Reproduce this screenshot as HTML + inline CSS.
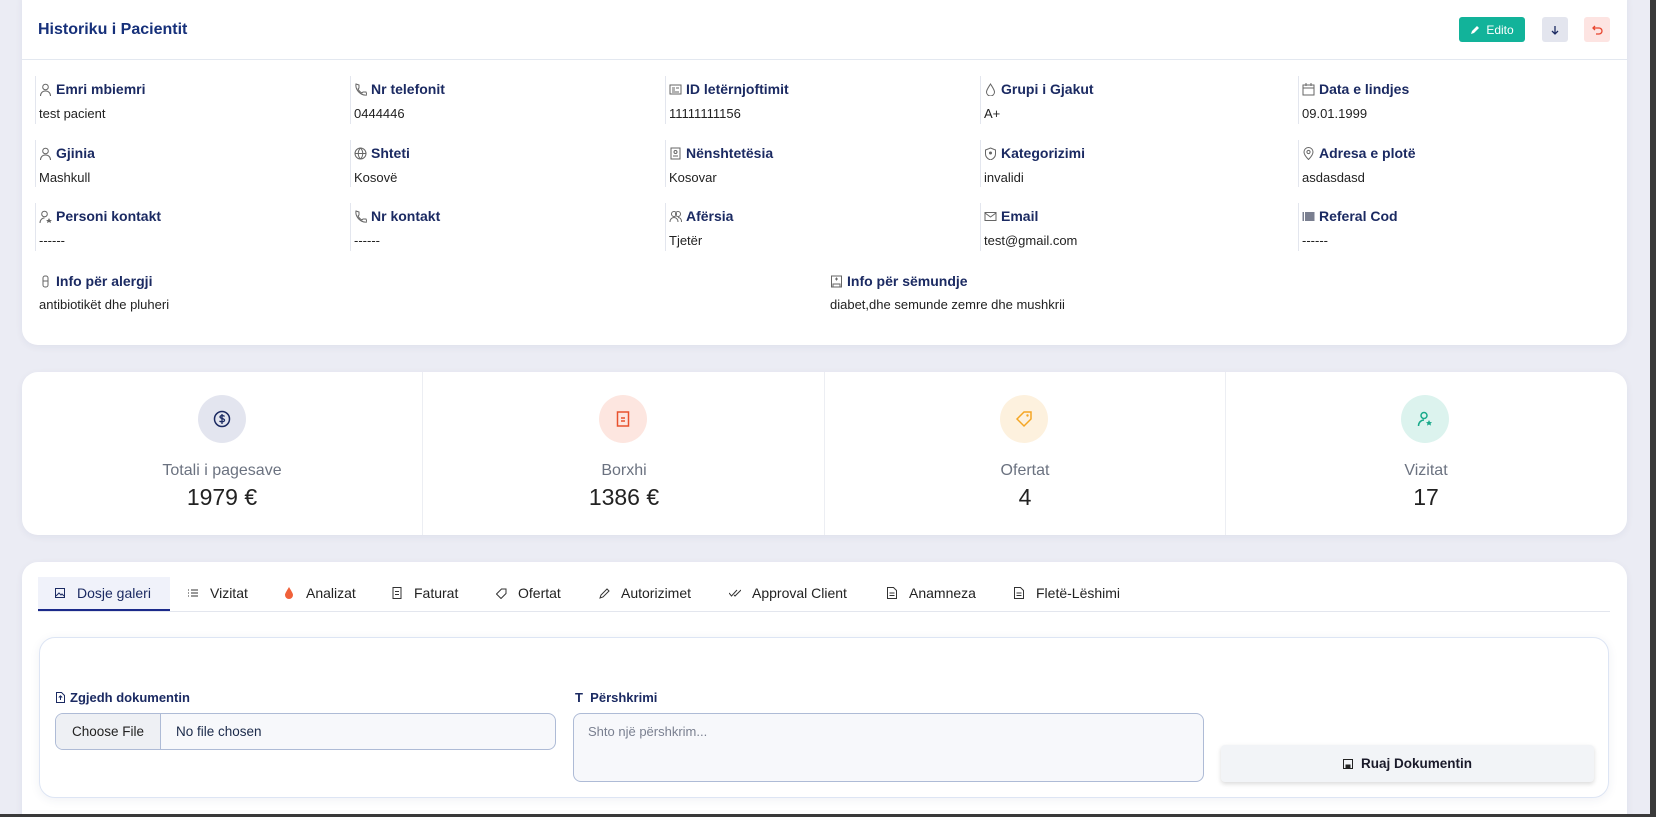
<!DOCTYPE html>
<html style="overflow:hidden;width:1656px;height:817px"><head><meta charset="utf-8"><style>
*{box-sizing:border-box;margin:0;padding:0}
body{width:1656px;height:817px;overflow:hidden;background:#ebecf4;font-family:"Liberation Sans",sans-serif;position:relative;color:#222}
#w{position:absolute;left:0;top:0;width:1656px;height:817px;overflow:hidden}
.card{position:absolute;background:#fff;border-radius:16px;box-shadow:0 2px 8px rgba(40,50,100,.06)}
.abs{position:absolute}
.lbl{position:absolute;font-size:14px;font-weight:bold;color:#1b2a62;white-space:nowrap;display:flex;align-items:center;gap:4px}
.val{position:absolute;font-size:13px;color:#222;white-space:nowrap}
.vl{position:absolute;width:1px;background:#e3e6ee}
.ic{width:13px;height:13px;flex:none}
.tab{position:absolute;top:585px;font-size:14px;color:#222;white-space:nowrap;display:flex;align-items:center;gap:8px}
.circ{position:absolute;width:48px;height:48px;border-radius:50%;top:395px;display:flex;align-items:center;justify-content:center}
.sl{position:absolute;top:462px;font-size:16px;color:#6b7280;text-align:center;width:402px}
.sv{position:absolute;top:484px;font-size:23px;color:#222;text-align:center;width:402px}
</style></head><body><div id="w">

<div class="card" style="left:22px;top:-16px;width:1605px;height:361px"></div>
<div class="abs" style="left:38px;top:21px;font-size:16px;font-weight:bold;color:#16307a">Historiku i Pacientit</div>
<div class="abs" style="left:1459px;top:17px;width:66px;height:25px;background:#12b39a;border-radius:3px;color:#fff;font-size:12px;display:flex;align-items:center;justify-content:center;gap:6px"><svg width="10" height="10" viewBox="0 0 10 10"><path d="M1 9l1-3 5-5 2 2-5 5z" fill="#fff"/></svg>Edito</div>
<div class="abs" style="left:1542px;top:17px;width:26px;height:25px;background:#e3e5ee;border-radius:3px;display:flex;align-items:center;justify-content:center"><svg width="10" height="10" viewBox="0 0 10 10"><path d="M5 1v8M2 6l3 3 3-3" stroke="#1b2a62" stroke-width="1.3" fill="none"/></svg></div>
<div class="abs" style="left:1584px;top:17px;width:26px;height:25px;background:#fde4e2;border-radius:3px;display:flex;align-items:center;justify-content:center"><svg width="11" height="11" viewBox="0 0 11 11"><path d="M3 2L1 4l2 2M1 4h6a3 3 0 010 6H4" stroke="#e8452e" stroke-width="1.3" fill="none"/></svg></div>
<div class="abs" style="left:22px;top:59px;width:1605px;height:1px;background:#e3e8f0"></div>

<div class="vl" style="left:35px;top:76px;height:48px"></div><div class="vl" style="left:350px;top:76px;height:48px"></div><div class="vl" style="left:665px;top:76px;height:48px"></div><div class="vl" style="left:980px;top:76px;height:48px"></div><div class="vl" style="left:1298px;top:76px;height:48px"></div>
<div class="vl" style="left:35px;top:140px;height:47px"></div><div class="vl" style="left:350px;top:140px;height:47px"></div><div class="vl" style="left:665px;top:140px;height:47px"></div><div class="vl" style="left:980px;top:140px;height:47px"></div><div class="vl" style="left:1298px;top:140px;height:47px"></div>
<div class="vl" style="left:35px;top:203px;height:48px"></div><div class="vl" style="left:350px;top:203px;height:48px"></div><div class="vl" style="left:665px;top:203px;height:48px"></div><div class="vl" style="left:980px;top:203px;height:48px"></div><div class="vl" style="left:1298px;top:203px;height:48px"></div>

<div class="lbl" style="left:39px;top:81px"><svg class="ic" viewBox="0 0 13 13"><circle cx="6.5" cy="4" r="2.8" stroke="#666" fill="none"/><path d="M1.5 13c0-3 2-5 5-5s5 2 5 5" stroke="#666" fill="none"/></svg>Emri mbiemri</div>
<div class="val" style="left:39px;top:106px">test pacient</div>
<div class="lbl" style="left:354px;top:81px"><svg class="ic" viewBox="0 0 13 13"><path d="M2 1l3 1 0 3-1 1c1 2 2 3 4 4l1-1 3 0 1 3c-6 1-12-5-11-11z" stroke="#666" fill="none"/></svg>Nr telefonit</div>
<div class="val" style="left:354px;top:106px">0444446</div>
<div class="lbl" style="left:669px;top:81px"><svg class="ic" viewBox="0 0 13 13"><rect x="1" y="2" width="11" height="9" stroke="#666" fill="none"/><path d="M3 5h3M3 7h3M7 5h3M3 9h7" stroke="#666"/></svg>ID letërnjoftimit</div>
<div class="val" style="left:669px;top:106px">11111111156</div>
<div class="lbl" style="left:984px;top:81px"><svg class="ic" viewBox="0 0 13 13"><path d="M6.5 1C4 5 2.5 7 2.5 9a4 4 0 008 0c0-2-1.5-4-4-8z" stroke="#666" fill="none"/></svg>Grupi i Gjakut</div>
<div class="val" style="left:984px;top:106px">A+</div>
<div class="lbl" style="left:1302px;top:81px"><svg class="ic" viewBox="0 0 13 13"><rect x="1" y="2" width="11" height="10" stroke="#666" fill="none"/><path d="M1 5h11M4 0v3M9 0v3" stroke="#666"/></svg>Data e lindjes</div>
<div class="val" style="left:1302px;top:106px">09.01.1999</div>

<div class="lbl" style="left:39px;top:145px"><svg class="ic" viewBox="0 0 13 13"><circle cx="6.5" cy="4" r="2.8" stroke="#666" fill="none"/><path d="M1.5 13c0-3 2-5 5-5s5 2 5 5" stroke="#666" fill="none"/></svg>Gjinia</div>
<div class="val" style="left:39px;top:170px">Mashkull</div>
<div class="lbl" style="left:354px;top:145px"><svg class="ic" viewBox="0 0 13 13"><circle cx="6.5" cy="6.5" r="5.5" stroke="#666" fill="none"/><path d="M1 6.5h11M6.5 1c-3 3-3 8 0 11M6.5 1c3 3 3 8 0 11" stroke="#666" fill="none"/></svg>Shteti</div>
<div class="val" style="left:354px;top:170px">Kosovë</div>
<div class="lbl" style="left:669px;top:145px"><svg class="ic" viewBox="0 0 13 13"><rect x="2" y="1" width="9" height="11" stroke="#666" fill="none"/><circle cx="6.5" cy="5" r="1.5" stroke="#666" fill="none"/><path d="M4 9h5" stroke="#666"/></svg>Nënshtetësia</div>
<div class="val" style="left:669px;top:170px">Kosovar</div>
<div class="lbl" style="left:984px;top:145px"><svg class="ic" viewBox="0 0 13 13"><path d="M6.5 1l5 2v4c0 3-2.5 5-5 6-2.5-1-5-3-5-6V3z" stroke="#666" fill="none"/><circle cx="6.5" cy="6" r="1.5" fill="#666"/></svg>Kategorizimi</div>
<div class="val" style="left:984px;top:170px">invalidi</div>
<div class="lbl" style="left:1302px;top:145px"><svg class="ic" viewBox="0 0 13 13"><path d="M6.5 12.5C3 9 2 7 2 5a4.5 4.5 0 019 0c0 2-1 4-4.5 7.5z" stroke="#666" fill="none"/><circle cx="6.5" cy="5" r="1.6" stroke="#666" fill="none"/></svg>Adresa e plotë</div>
<div class="val" style="left:1302px;top:170px">asdasdasd</div>

<div class="lbl" style="left:39px;top:208px"><svg class="ic" viewBox="0 0 13 13"><circle cx="5.5" cy="4" r="2.8" stroke="#666" fill="none"/><path d="M1 13c0-3 2-5 4.5-5" stroke="#666" fill="none"/><path d="M10 8l1 2 2 0-1.5 1.3.5 1.7-2-1-2 1 .5-1.7L7 10h2z" fill="#666"/></svg>Personi kontakt</div>
<div class="val" style="left:39px;top:233px">------</div>
<div class="lbl" style="left:354px;top:208px"><svg class="ic" viewBox="0 0 13 13"><path d="M2 1l3 1 0 3-1 1c1 2 2 3 4 4l1-1 3 0 1 3c-6 1-12-5-11-11z" stroke="#666" fill="none"/></svg>Nr kontakt</div>
<div class="val" style="left:354px;top:233px">------</div>
<div class="lbl" style="left:669px;top:208px"><svg class="ic" viewBox="0 0 13 13"><circle cx="5" cy="4" r="2.5" stroke="#666" fill="none"/><circle cx="9" cy="4" r="2.5" stroke="#666" fill="none"/><path d="M1 12c0-3 2-4.5 4-4.5s4 1.5 4 4.5M9 7.5c2 0 3.5 1.5 3.5 4.5" stroke="#666" fill="none"/></svg>Afërsia</div>
<div class="val" style="left:669px;top:233px">Tjetër</div>
<div class="lbl" style="left:984px;top:208px"><svg class="ic" viewBox="0 0 13 13"><rect x="1" y="2.5" width="11" height="8" stroke="#666" fill="none"/><path d="M1 3l5.5 4L12 3" stroke="#666" fill="none"/></svg>Email</div>
<div class="val" style="left:984px;top:233px">test@gmail.com</div>
<div class="lbl" style="left:1302px;top:208px"><svg class="ic" viewBox="0 0 13 13"><rect x="0.5" y="2" width="12" height="9" fill="#7a7f90"/><path d="M2.5 2v9" stroke="#fff"/></svg>Referal Cod</div>
<div class="val" style="left:1302px;top:233px">------</div>

<div class="lbl" style="left:39px;top:273px"><svg class="ic" viewBox="0 0 13 13"><rect x="4" y="1" width="5" height="11" rx="2" stroke="#666" fill="none"/><path d="M4 6h5" stroke="#666"/></svg>Info për alergji</div>
<div class="val" style="left:39px;top:297px">antibiotikët dhe pluheri</div>
<div class="lbl" style="left:830px;top:273px"><svg class="ic" viewBox="0 0 13 13"><rect x="1.5" y="1" width="10" height="11" stroke="#666" fill="none"/><path d="M5 4h3M6.5 2.5v3M3 12V9h7v3" stroke="#666" fill="none"/></svg>Info për sëmundje</div>
<div class="val" style="left:830px;top:297px">diabet,dhe semunde zemre dhe mushkrii</div>

<div class="card" style="left:22px;top:372px;width:1605px;height:163px"></div>
<div class="vl" style="left:422px;top:372px;height:163px;background:#eceef3"></div>
<div class="vl" style="left:824px;top:372px;height:163px;background:#eceef3"></div>
<div class="vl" style="left:1225px;top:372px;height:163px;background:#eceef3"></div>
<div class="circ" style="left:198px;background:#e3e5ef"><svg width="18" height="18" viewBox="0 0 18 18"><circle cx="9" cy="9" r="7.5" stroke="#1b2a62" stroke-width="1.5" fill="none"/><path d="M11.5 6.5c-.5-1-4.5-1.5-4.5.5s5 1 4.5 3.5c-.5 1.8-4 1.5-5 .5M9 4v10" stroke="#1b2a62" stroke-width="1.3" fill="none"/></svg></div>
<div class="circ" style="left:599px;background:#fde6e0"><svg width="18" height="18" viewBox="0 0 18 18"><rect x="3.5" y="2" width="11" height="14" stroke="#e8522e" stroke-width="1.5" fill="none"/><path d="M7 8h4M7 11h4" stroke="#e8522e" stroke-width="1.5"/></svg></div>
<div class="circ" style="left:1000px;background:#fdf1de"><svg width="18" height="18" viewBox="0 0 18 18"><path d="M9 2h7v7l-7 7-7-7z" stroke="#f5a623" stroke-width="1.5" fill="none"/><circle cx="12.5" cy="5.5" r="1.2" fill="#f5a623"/></svg></div>
<div class="circ" style="left:1401px;background:#dcf3ee"><svg width="18" height="18" viewBox="0 0 18 18"><circle cx="8" cy="5.5" r="3" stroke="#18a98a" stroke-width="1.5" fill="none"/><path d="M2.5 16c0-3.5 2.5-6 5.5-6" stroke="#18a98a" stroke-width="1.5" fill="none"/><path d="M13 10l1 2 2 .2-1.5 1.4.5 2-2-1.1-2 1.1.5-2L10 12.2l2-.2z" fill="#18a98a"/></svg></div>
<div class="sl" style="left:21px">Totali i pagesave</div><div class="sv" style="left:21px">1979 €</div>
<div class="sl" style="left:423px">Borxhi</div><div class="sv" style="left:423px">1386 €</div>
<div class="sl" style="left:824px">Ofertat</div><div class="sv" style="left:824px">4</div>
<div class="sl" style="left:1225px">Vizitat</div><div class="sv" style="left:1225px">17</div>

<div class="card" style="left:22px;top:562px;width:1605px;height:280px"></div>
<div class="abs" style="left:38px;top:577px;width:132px;height:34px;background:#f0f2fa;border-bottom:2px solid #1b2a8a"></div>
<div class="abs" style="left:38px;top:611px;width:1572px;height:1px;background:#e3e6ee"></div>
<div class="tab" style="left:55px"><svg width="10" height="10" viewBox="0 0 10 10"><rect x=".5" y=".5" width="9" height="9" stroke="#1b2a62" fill="none"/><path d="M1 8l3-3 2 2 1-1 2 2" stroke="#1b2a62" fill="none"/></svg><span style="margin-left:4px;color:#1b2a62">Dosje galeri</span></div>
<div class="tab" style="left:188px"><svg width="10" height="10" viewBox="0 0 10 10"><path d="M0 2h1M3 2h7M0 5h1M3 5h7M0 8h1M3 8h7" stroke="#333"/></svg><span style="margin-left:4px">Vizitat</span></div>
<div class="tab" style="left:284px"><svg width="10" height="12" viewBox="0 0 10 12"><path d="M5 0C2 5 1 6.5 1 8a4 4 0 008 0C9 6.5 8 5 5 0z" fill="#f0613a"/></svg><span style="margin-left:4px">Analizat</span></div>
<div class="tab" style="left:392px"><svg width="10" height="12" viewBox="0 0 10 12"><rect x="1" y=".5" width="8" height="11" stroke="#333" fill="none"/><path d="M3 4.5h4M3 7.5h4" stroke="#333"/></svg><span style="margin-left:4px">Faturat</span></div>
<div class="tab" style="left:496px"><svg width="11" height="11" viewBox="0 0 11 11"><path d="M5.5 1H10v4.5L5 10.5 .5 6z" stroke="#333" fill="none"/></svg><span style="margin-left:3px">Ofertat</span></div>
<div class="tab" style="left:599px"><svg width="11" height="11" viewBox="0 0 11 11"><path d="M1 10l1-3 6-6 2 2-6 6z" stroke="#333" fill="none"/></svg><span style="margin-left:3px">Autorizimet</span></div>
<div class="tab" style="left:729px"><svg width="12" height="8" viewBox="0 0 12 8"><path d="M0 4l2.5 3L8 1M5 6l1 1 6-6" stroke="#333" fill="none"/></svg><span style="margin-left:3px">Approval Client</span></div>
<div class="tab" style="left:887px"><svg width="10" height="12" viewBox="0 0 10 12"><path d="M.5.5h6l3 3v8h-9z" stroke="#333" fill="none"/><path d="M2.5 6h5M2.5 8.5h5" stroke="#333"/></svg><span style="margin-left:4px">Anamneza</span></div>
<div class="tab" style="left:1014px"><svg width="10" height="12" viewBox="0 0 10 12"><path d="M.5.5h6l3 3v8h-9z" stroke="#333" fill="none"/><path d="M2.5 6h5M2.5 8.5h5" stroke="#333"/></svg><span style="margin-left:4px">Fletë-Lëshimi</span></div>

<div class="abs" style="left:39px;top:637px;width:1570px;height:161px;border:1px solid #dde5f4;border-radius:16px;background:#fff;box-shadow:0 2px 10px rgba(40,60,120,.07)"></div>
<div class="abs" style="left:56px;top:690px;font-size:13px;font-weight:bold;color:#1b2a62;display:flex;align-items:center;gap:5px"><svg width="9" height="11" viewBox="0 0 9 11"><path d="M.5.5h5l3 3v7h-8z" stroke="#1b2a62" fill="none"/><path d="M4.5 8V4M2.8 5.5l1.7-1.7 1.7 1.7" stroke="#1b2a62" fill="none"/></svg>Zgjedh dokumentin</div>
<div class="abs" style="left:55px;top:713px;width:501px;height:37px;border:1px solid #aebbd6;border-radius:8px;background:#f7f8fb;overflow:hidden;display:flex;align-items:center;font-size:13.5px">
<div style="width:105px;height:100%;background:#eef0f4;border-right:1px solid #aebbd6;display:flex;align-items:center;justify-content:center;color:#222">Choose File</div><div style="padding-left:15px;color:#1b2a4a">No file chosen</div></div>
<div class="abs" style="left:575px;top:690px;font-size:13px;font-weight:bold;color:#1b2a62">T&nbsp; Përshkrimi</div>
<div class="abs" style="left:573px;top:713px;width:631px;height:69px;border:1px solid #aebbd6;border-radius:8px;background:#f7f8fb;font-size:13px;color:#7a8090;padding:10px 14px">Shto një përshkrim...</div>
<div class="abs" style="left:1221px;top:745px;width:373px;height:37px;background:#f2f4f7;border-radius:4px;box-shadow:0 2px 5px rgba(0,0,0,.15);display:flex;align-items:center;justify-content:center;gap:8px;font-size:13.5px;font-weight:bold;color:#1a1a2a"><svg width="10" height="10" viewBox="0 0 10 10"><rect x=".5" y=".5" width="9" height="9" stroke="#222" fill="none"/><rect x="2.5" y="5.5" width="5" height="4" fill="#222"/></svg>Ruaj Dokumentin</div>

<div class="abs" style="left:1650px;top:0;width:6px;height:817px;background:#3a3a3a"></div>
<div class="abs" style="left:0;top:814px;width:1656px;height:3px;background:#3a3a3a"></div>
</div></body></html>
